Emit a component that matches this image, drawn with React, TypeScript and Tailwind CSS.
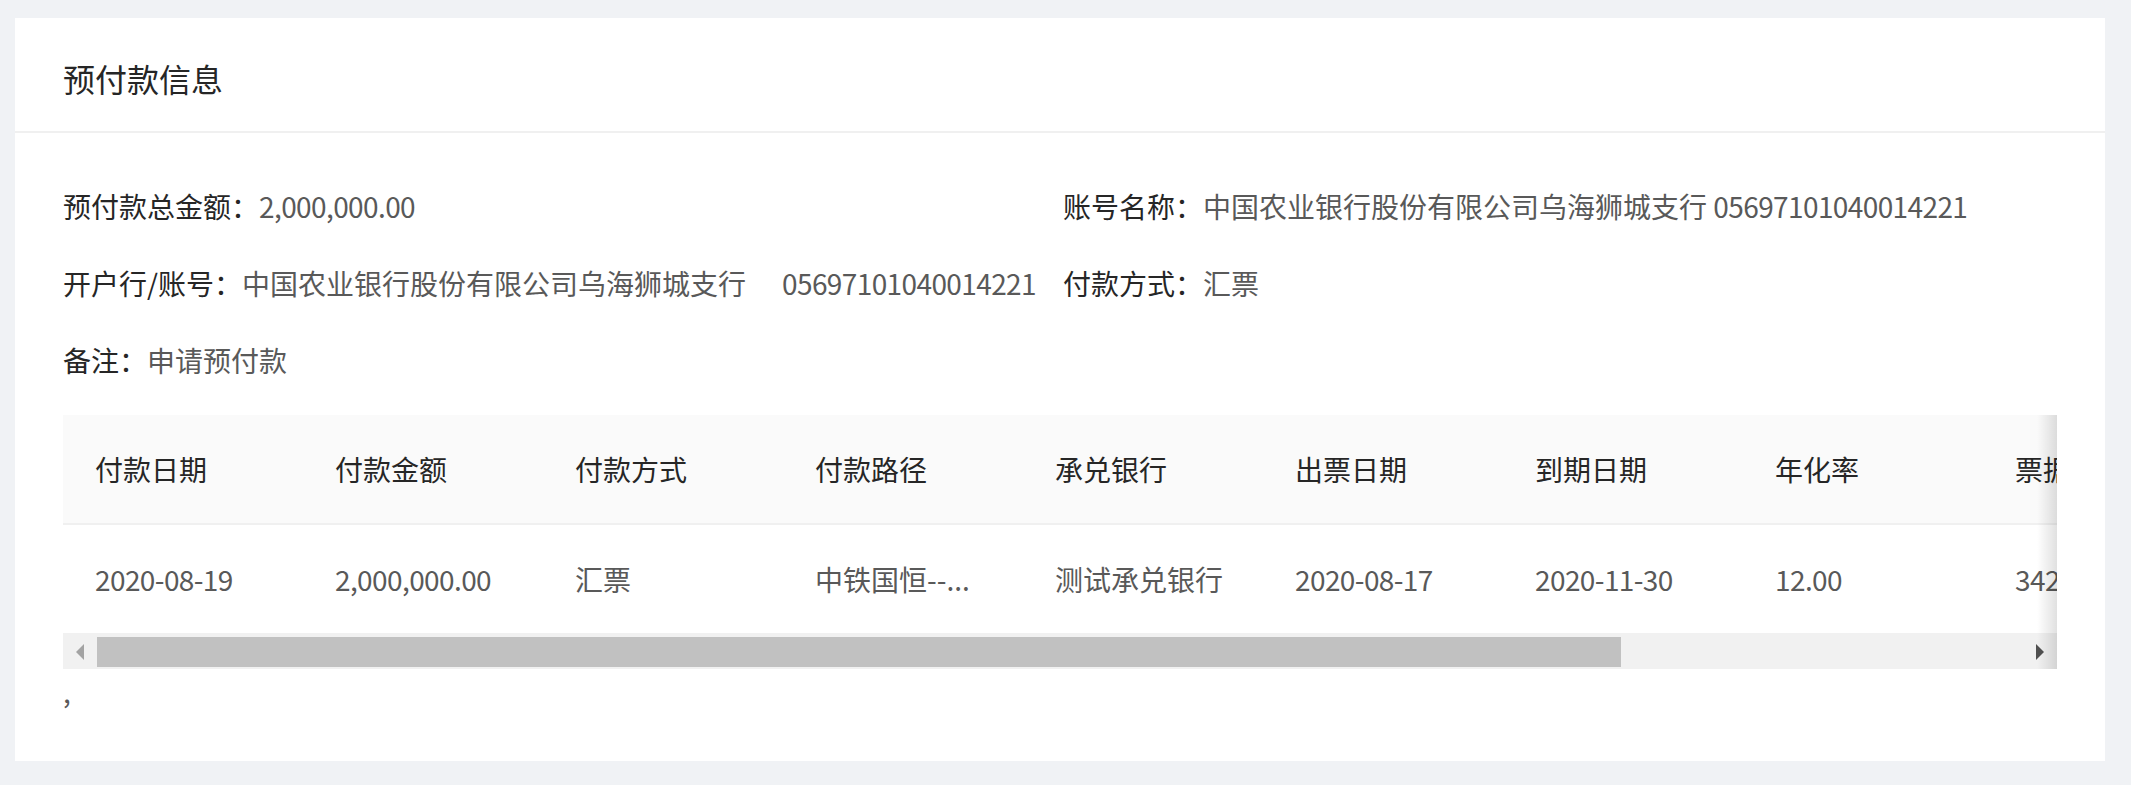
import React from "react";

const columns = [
  "付款日期",
  "付款金额",
  "付款方式",
  "付款路径",
  "承兑银行",
  "出票日期",
  "到期日期",
  "年化率",
  "票据号码",
  "备注",
];

const row = [
  "2020-08-19",
  "2,000,000.00",
  "汇票",
  "中铁国恒--...",
  "测试承兑银行",
  "2020-08-17",
  "2020-11-30",
  "12.00",
  "34220100",
  "申请预付款",
];

const isNum = (v: string) => /^[\d,.\-]+$/.test(v);

const Num = ({ children }: { children: React.ReactNode }) => (
  <span className="tracking-[-0.6px]">{children}</span>
);

const Item = ({ label, children }: { label: string; children: React.ReactNode }) => (
  <div className="h-[44px] leading-[44px] whitespace-nowrap">
    <span className="text-[#262626]">{label}：</span>
    <span className="text-[#595959]">{children}</span>
  </div>
);

export default function App() {
  return (
    <div
      className="min-h-screen bg-[#f0f2f5] pt-[18px] pl-[15px] pr-[26px] pb-[25px]"
      style={{ fontFamily: '"Noto Sans CJK SC", "Noto Sans", sans-serif' }}
    >
      <div className="bg-white">
        <div className="h-[115px] px-[48px] pt-[6px] flex items-center border-b-2 border-[#f0f0f0] text-[32px] text-[#262626]">
          预付款信息
        </div>

        <div className="px-[48px] pt-[51px] pb-[48px] text-[28px]">
          <div className="grid grid-cols-[1000px_1fr] gap-y-[33px]">
            <Item label="预付款总金额">
              <Num>2,000,000.00</Num>
            </Item>
            <Item label="账号名称">
              中国农业银行股份有限公司乌海狮城支行 <Num>05697101040014221</Num>
            </Item>
            <Item label="开户行/账号">
              中国农业银行股份有限公司乌海狮城支行
              <span className="ml-[36px]">
                <Num>05697101040014221</Num>
              </span>
            </Item>
            <Item label="付款方式">汇票</Item>
            <Item label="备注">申请预付款</Item>
          </div>

          <div className="relative mt-[33px] overflow-hidden">
            <div className="w-[2520px]">
              <div className="flex bg-[#fafafa] border-b-2 border-[#f0f0f0] text-[#262626]">
                {columns.map((c) => (
                  <div key={c} className="w-[240px] shrink-0 px-[32px] py-[32px] leading-[44px] whitespace-nowrap">
                    {c}
                  </div>
                ))}
              </div>
              <div className="flex text-[#595959]">
                {row.map((v, i) => (
                  <div key={i} className="w-[240px] shrink-0 px-[32px] py-[32px] leading-[44px] whitespace-nowrap">
                    {isNum(v) ? <Num>{v}</Num> : v}
                  </div>
                ))}
              </div>
            </div>

            <div className="flex h-[36px] bg-[#f1f1f1]">
              <div className="w-[34px] flex items-center justify-center pt-[2px]">
                <div className="w-0 h-0 border-y-[8px] border-y-transparent border-r-[8px] border-r-[#a3a3a3]" />
              </div>
              <div className="w-[1524px] h-[30px] mt-[4px] bg-[#c1c1c1]" />
              <div className="flex-1" />
              <div className="w-[34px] flex items-center justify-center pt-[2px]">
                <div className="w-0 h-0 border-y-[8px] border-y-transparent border-l-[8px] border-l-[#505050]" />
              </div>
            </div>

            <div className="absolute right-0 inset-y-0 w-[20px] bg-linear-to-l from-[rgba(0,0,0,0.12)] to-transparent" />
          </div>

          <div className="leading-[44px] text-[#595959]">,</div>
        </div>
      </div>
    </div>
  );
}
